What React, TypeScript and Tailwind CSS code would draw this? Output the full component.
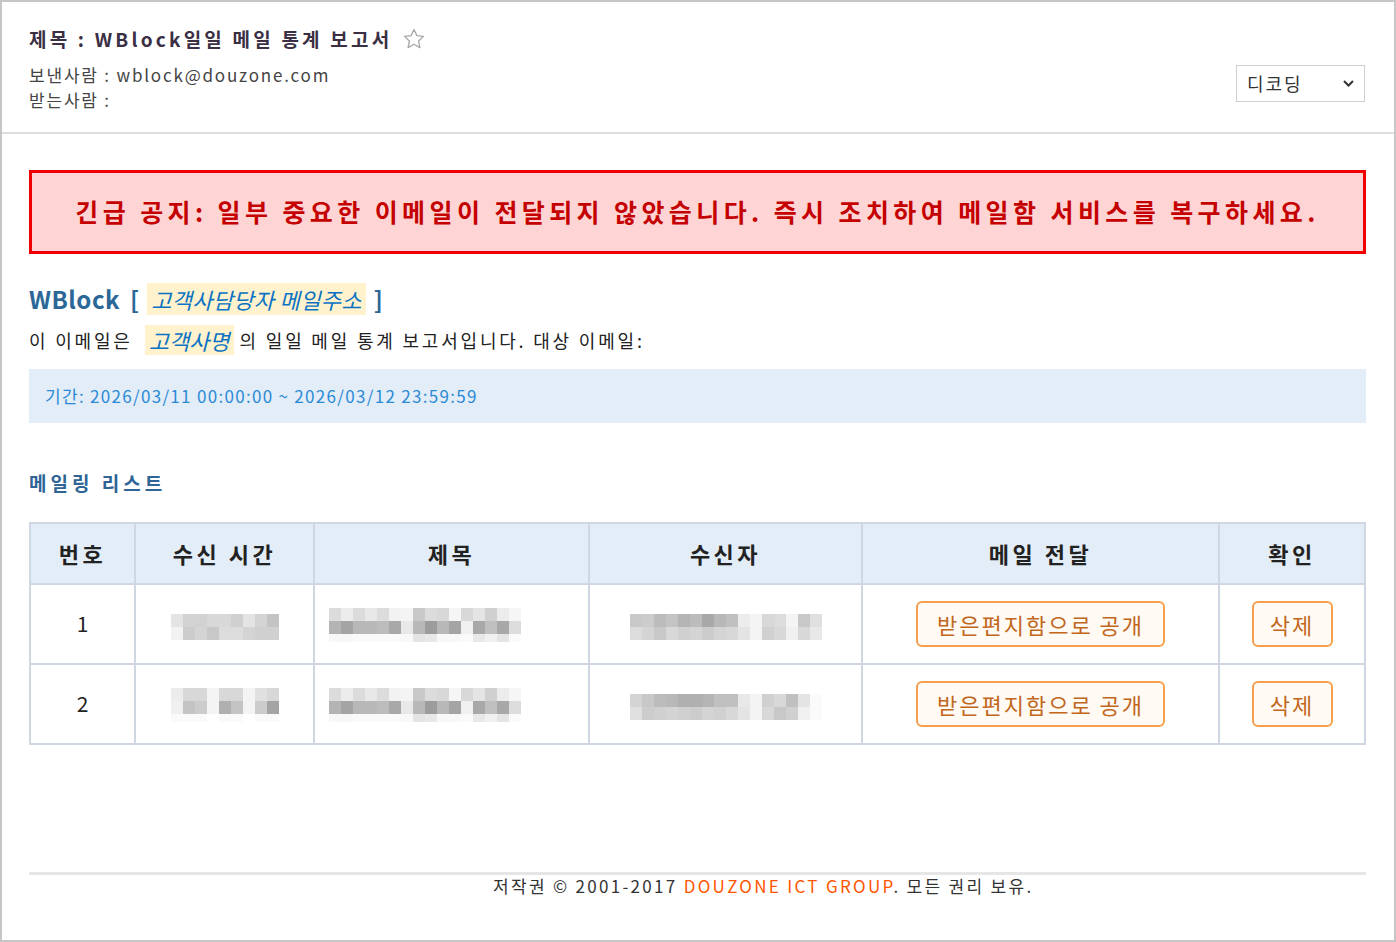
const font = "font-['Noto_Sans_CJK_KR','Noto_Sans',sans-serif]";

type BlurProps = { rows: string[]; cell?: number };

// blurred placeholder, made of gray squares
function Blur({ rows, cell = 12 }: BlurProps) {
  return (
    <div className="inline-flex flex-col align-middle">
      {rows.map((r, i) => (
        <div key={i} className="flex">
          {r.split(" ").map((g, j) => (
            <div key={j} style={{ width: cell, height: i === 2 ? 8 : 13, background: `#${g}${g}${g}` }} />
          ))}
        </div>
      ))}
    </div>
  );
}

const rowsData = [
  {
    no: "1",
    time: ["e4 d2 d2 d8 d8 d0 e4 d4 c4", "f2 cc d4 c8 dc dc d4 d0 d0"],
    title: [
      "dc ec dc e8 dc f2 f4 c8 dc d8 f6 d8 e4 d0 ec f6",
      "b4 a4 b8 b8 bc a8 e8 b8 9c b8 a4 f0 a8 c0 a8 dc",
      "f8 f8 fa fa fa fa f8 e4 e8 f8 f8 fa e8 f0 e4 fa",
    ],
    to: ["c8 cc bc c4 b4 bc a8 b8 c0 ec f4 d8 dc f4 c8 e0", "dc d4 c8 d8 d0 d4 cc d4 d8 e4 f4 d0 d8 f0 d8 e8"],
  },
  {
    no: "2",
    time: ["ec d8 d8 f4 d8 d8 f4 e0 d8", "f0 c4 cc f4 b0 c4 f4 cc a4", "fa fa fa ff fa fa ff fa fa"],
    title: [
      "dc ec dc e8 dc f2 f4 c8 dc d8 f6 d8 e4 d0 ec f6",
      "b4 a4 b8 b8 bc a8 e8 b8 9c b8 a4 f0 a8 c0 a8 dc",
      "f8 f8 fa fa fa fa f8 e4 e8 f8 f8 fa e8 f0 e4 fa",
    ],
    to: ["d4 c8 bc b8 b0 b0 b4 c0 c0 e8 f4 d0 d8 c0 e4 fa", "e0 cc d0 d4 d0 cc d4 d0 d8 e4 f4 d8 c8 d0 f0 fa"],
  },
];

function Star() {
  return (
    <svg width="24" height="24" viewBox="0 0 24 24" fill="none" stroke="#a8a8a8" strokeWidth="1.3" strokeLinejoin="round">
      <path d="M12 2.5l2.9 6.1 6.6.8-4.9 4.6 1.3 6.6L12 17.3l-5.9 3.3 1.3-6.6-4.9-4.6 6.6-.8z" />
    </svg>
  );
}

const cell = "border-2 border-[#cfd7e2]";
const btn = "h-[46px] rounded-[6px] border-2 border-[#f6a04c] bg-[#fffaf3] text-[22px] tracking-[2px] text-[#c2661c]";

export default function App() {
  return (
    <div className={`h-[942px] w-[1396px] overflow-hidden border-2 border-[#c6c6c6] bg-white ${font}`}>
      {/* header */}
      <header className="flex h-[132px] justify-between border-b-2 border-[#dedede] pl-[27px] pr-[29px]">
        <div className="pt-[22px]">
          <div className="flex items-center gap-[10px]">
            <h1 className="text-[19px] leading-[30px] font-bold tracking-[3.2px] text-[#3b2f44]">
              제목 : WBlock일일 메일 통계 보고서
            </h1>
            <Star />
          </div>
          <div className="mt-[8px] text-[17px] leading-[25px] tracking-[1.8px] text-[#444]">
            <p>보낸사람 : wblock@douzone.com</p>
            <p>받는사람 :</p>
          </div>
        </div>
        <div className="mt-[63px] flex h-[37px] w-[129px] items-center justify-between border border-[#cfcfcf] pl-[10px] pr-[10px] text-[18px] tracking-[2px] text-[#333]">
          <span>디코딩</span>
          <svg width="11" height="7" viewBox="0 0 11 7" fill="none" stroke="#333" strokeWidth="2">
            <path d="M1 1l4.5 4.5L10 1" />
          </svg>
        </div>
      </header>

      <main className="pl-[27px] pr-[28px]">
        {/* alert */}
        <div className="mt-[36px] flex h-[84px] items-center justify-center border-[3px] border-[#ee0000] bg-[#ffd4d4] text-[25px] font-bold tracking-[4.4px] text-[#c40000]">
          긴급 공지: 일부 중요한 이메일이 전달되지 않았습니다. 즉시 조치하여 메일함 서비스를 복구하세요.
        </div>

        <div className="mt-[29px] flex items-center text-[24px] leading-[32px] font-semibold text-[#2b6797]">
          <span className="tracking-[0.5px]">WBlock</span>
          <span className="ml-[10px]">[</span>
          <span className="ml-[8px] bg-[#fff2cc] px-[4px] text-[22px] font-normal tracking-[0.3px] italic text-[#0a72c4]">고객사담당자 메일주소</span>
          <span className="ml-[8px]">]</span>
        </div>

        <div className="mt-[10px] flex items-center text-[18px] leading-[30px] tracking-[2.8px] text-[#222]">
          <span>이 이메일은</span>
          <span className="ml-[12px] bg-[#fff2cc] px-[4px] text-[22px] tracking-[0px] italic text-[#0a72c4]">고객사명</span>
          <span className="ml-[6px]">의 일일 메일 통계 보고서입니다. 대상 이메일:</span>
        </div>

        <div className="mt-[14px] flex h-[54px] items-center bg-[#e3edf7] pl-[16px] text-[17px] tracking-[1.3px] text-[#2b8ad6]">
          기간: 2026/03/11 00:00:00 ~ 2026/03/12 23:59:59
        </div>

        <h2 className="mt-[47px] text-[19px] leading-[26px] font-bold tracking-[4px] text-[#2e6496]">메일링 리스트</h2>

        {/* mailing list */}
        <table className="mt-[26px] w-full border-collapse border-2 border-[#cfd7e2] text-center text-[21px] text-[#222]">
          <thead>
            <tr className="h-[61px] bg-[#e3edf7] text-[22px] font-bold tracking-[3.5px]">
              <th className={`w-[105px] ${cell}`}>번호</th>
              <th className={`w-[179px] ${cell}`}>수신 시간</th>
              <th className={`w-[275px] ${cell}`}>제목</th>
              <th className={`w-[273px] ${cell}`}>수신자</th>
              <th className={`w-[357px] ${cell}`}>메일 전달</th>
              <th className={cell}>확인</th>
            </tr>
          </thead>
          <tbody>
            {rowsData.map((r) => (
              <tr key={r.no} className="h-[80px]">
                <td className={cell}>{r.no}</td>
                <td className={cell}>
                  <Blur rows={r.time} />
                </td>
                <td className={`${cell} pl-[14px] text-left`}>
                  <Blur rows={r.title} />
                </td>
                <td className={cell}>
                  <Blur rows={r.to} />
                </td>
                <td className={cell}>
                  <button className={`w-[249px] ${btn}`}>받은편지함으로 공개</button>
                </td>
                <td className={cell}>
                  <button className={`w-[81px] ${btn}`}>삭제</button>
                </td>
              </tr>
            ))}
          </tbody>
        </table>

        {/* footer */}
        <footer className="mt-[127px] border-t-[3px] border-[#e6e6e6] pl-[464px] text-[17px] leading-[22px] tracking-[2.3px] text-[#333]">
          저작권 © 2001-2017 <span className="text-[#ff5500]">DOUZONE ICT GROUP</span>. 모든 권리 보유.
        </footer>
      </main>
    </div>
  );
}
